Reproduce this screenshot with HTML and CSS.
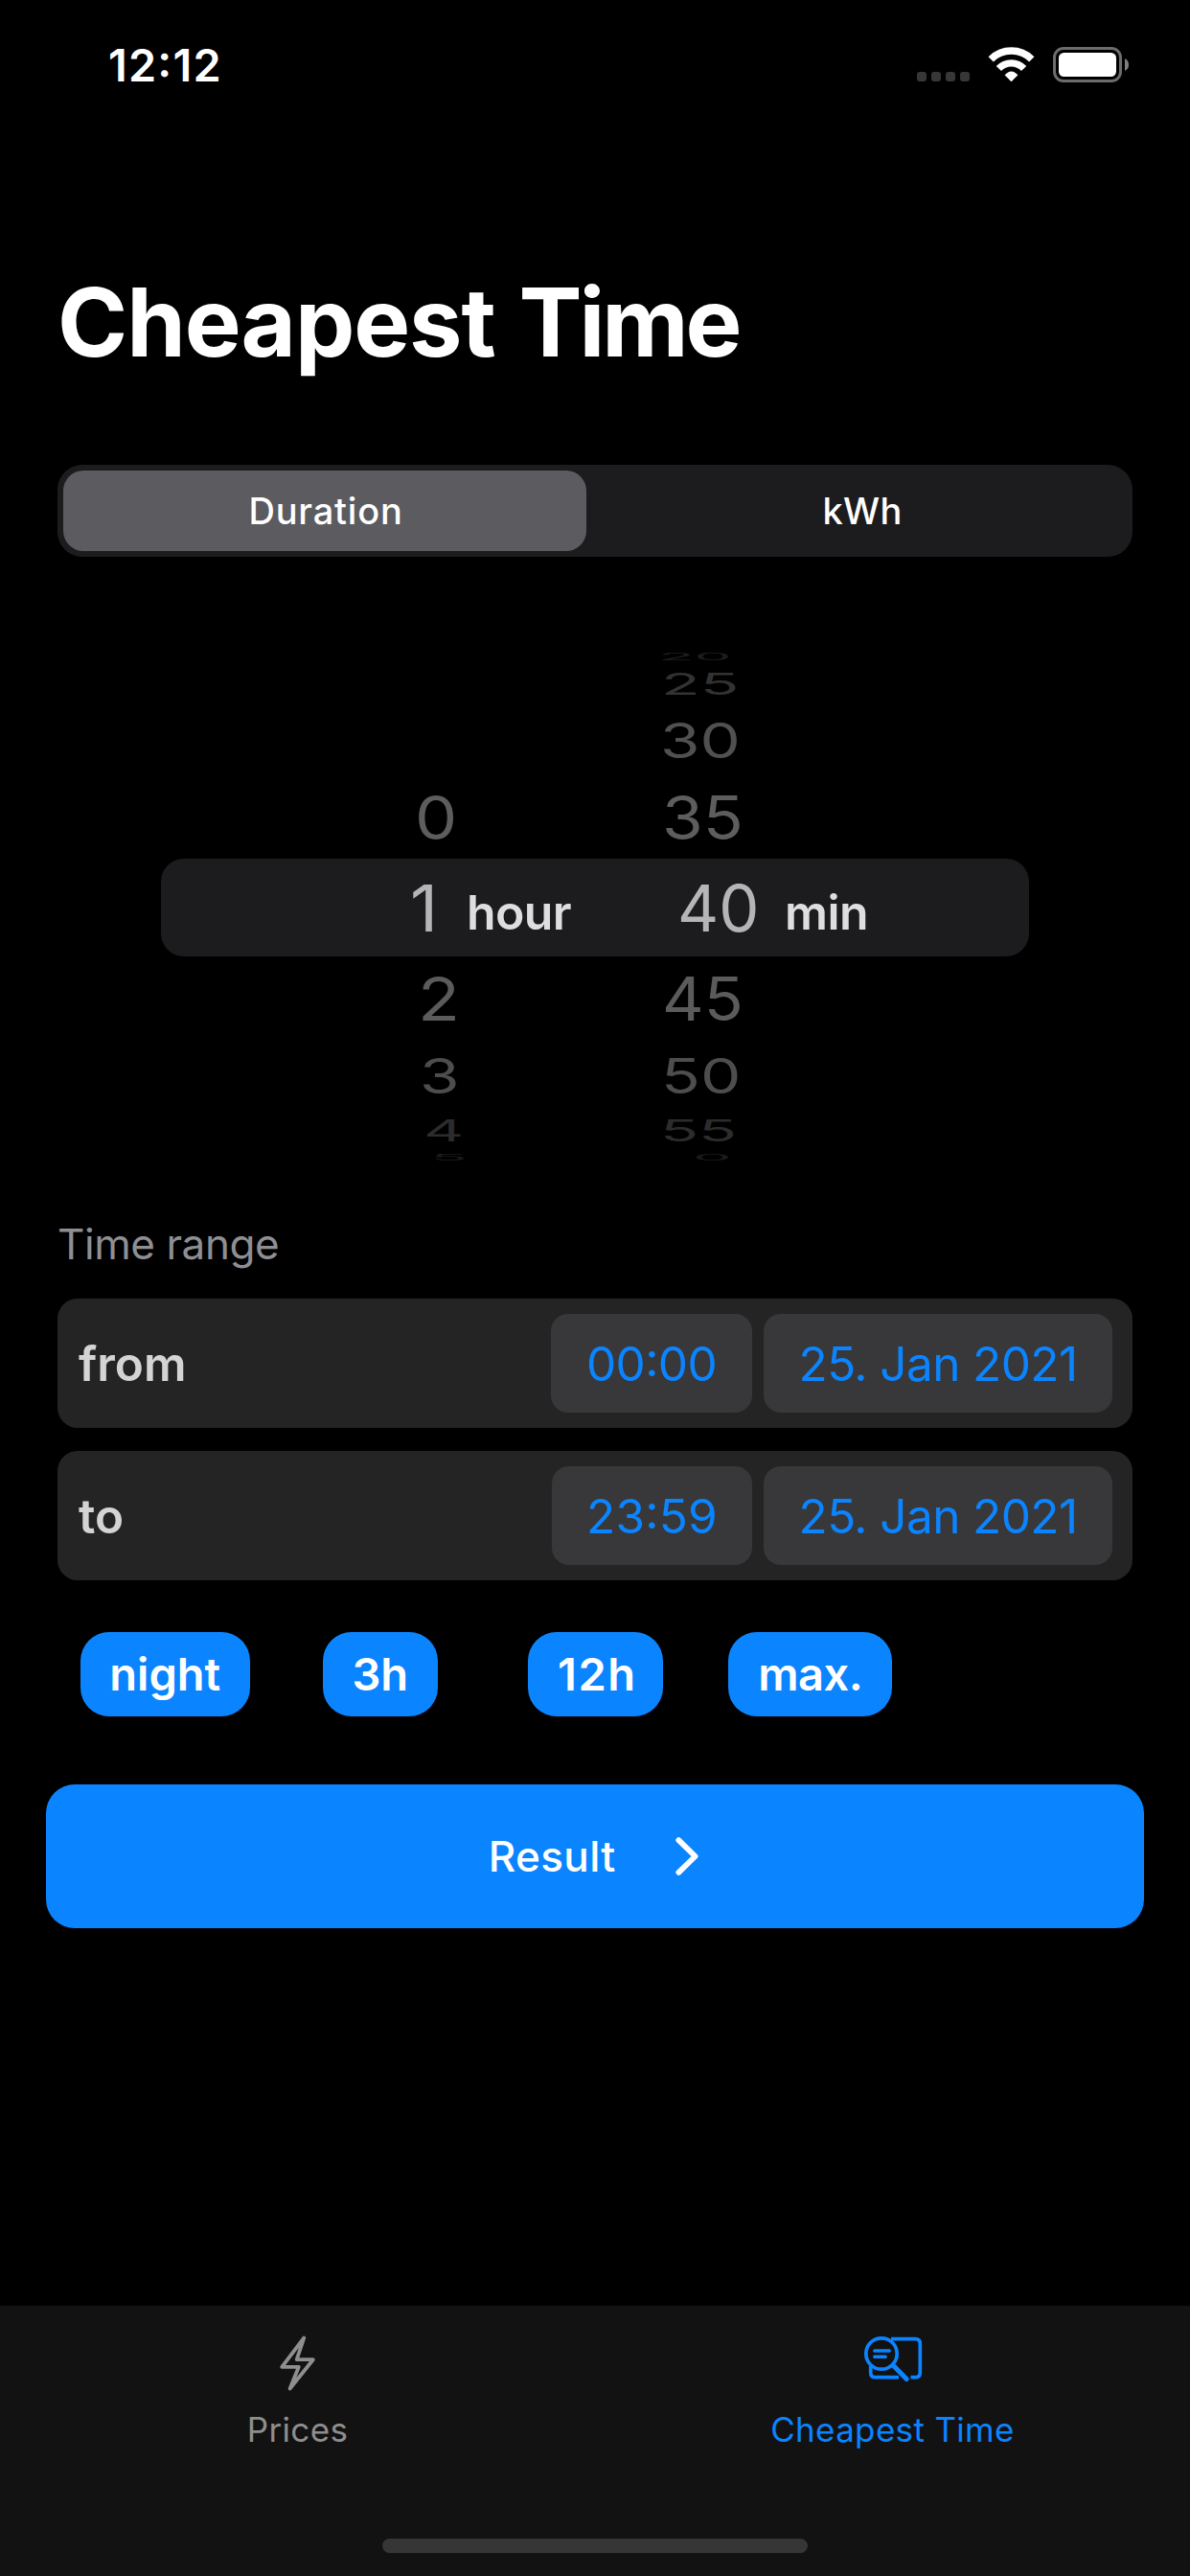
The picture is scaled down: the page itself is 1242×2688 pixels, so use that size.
FILE: index.html
```html
<!DOCTYPE html>
<html lang="en">
<head>
<meta charset="utf-8">
<title>Cheapest Time</title>
<link rel="stylesheet" href="styles.css">
</head>
<body>
<div class="screen">
  <header class="status">
    <span class="status-time">12:12</span>
    <div class="status-icons">
      <div class="signal"><i></i><i></i><i></i><i></i></div>
      <svg class="wifi" viewBox="0 0 49 38" width="49" height="38">
        <path d="M3.2 13.8A30.2 30.2 0 0 1 45.8 13.8" fill="none" stroke="#fff" stroke-width="7.5"/>
        <path d="M11.4 23.5A17.9 17.9 0 0 1 37.6 23.5" fill="none" stroke="#fff" stroke-width="7.3"/>
        <path d="M17.6 30.3Q24.5 22.6 31.4 30.3L24.5 37.2Z" fill="#fff"/>
      </svg>
      <svg class="battery" viewBox="0 0 80 38" width="80" height="38">
        <rect x="1.5" y="2.5" width="69" height="34" rx="9.5" fill="none" stroke="#6c6c6c" stroke-width="3"/>
        <rect x="6" y="7" width="60" height="25" rx="5.5" fill="#fff"/>
        <path d="M75 13Q79 15 79 19.500T75 26Z" fill="#808080"/>
      </svg>
    </div>
  </header>

  <main class="content">
    <h1 class="title">Cheapest <span class="title-end">Time</span></h1>

    <div class="segments">
      <button class="segment segment-on">Duration</button>
      <button class="segment">kWh</button>
    </div>

    <div class="picker">
      <div class="row far-top"><span class="hours"></span><span></span><span class="minutes m20">20</span></div>
      <div class="row third-top"><span class="hours"></span><span></span><span class="minutes m25">25</span></div>
      <div class="row second-top"><span class="hours"></span><span></span><span class="minutes m30">30</span></div>
      <div class="row first-top"><span class="hours h0">0</span><span></span><span class="minutes m35">35</span></div>
      <div class="row selected"><span class="hours h1">1</span><span class="unit">hour</span><span class="minutes m40">40</span><span class="unit">min</span></div>
      <div class="row first-bottom"><span class="hours h2">2</span><span></span><span class="minutes m45">45</span></div>
      <div class="row second-bottom"><span class="hours h3">3</span><span></span><span class="minutes m50">50</span></div>
      <div class="row third-bottom"><span class="hours h4">4</span><span></span><span class="minutes m55">55</span></div>
      <div class="row far-bottom"><span class="hours h5">5</span><span></span><span class="minutes m0">0</span></div>
    </div>

    <h2 class="label">Time range</h2>
    <div class="ranges">
      <div class="range">
        <span class="range-name">from</span>
        <span class="chip chip-time">00:00</span>
        <span class="chip chip-date">25. Jan 2021</span>
      </div>
      <div class="range">
        <span class="range-name">to</span>
        <span class="chip chip-time chip-end">23:59</span>
        <span class="chip chip-date">25. Jan 2021</span>
      </div>
    </div>

    <div class="presets">
      <button class="preset preset-night">night</button>
      <button class="preset preset-3h">3h</button>
      <button class="preset preset-12h">12h</button>
      <button class="preset preset-max">max.</button>
    </div>

    <button class="result">
      <span>Result</span>
      <svg viewBox="0 0 27 42" width="27" height="42"><path d="M3.300 4.200L20.600 21L3.300 37.800" fill="none" stroke="#fff" stroke-width="5.800" stroke-linecap="round" stroke-linejoin="round"/></svg>
    </button>
  </main>

  <footer class="tabbar">
    <nav class="tabs">
      <a class="tab">
        <svg viewBox="0 0 38 60" width="38" height="60"><path d="M25.300 3.500L17.700 26.200H34.800L10.600 56.500L19.800 33.800H2.200Z" fill="none" stroke="currentColor" stroke-width="3.800" stroke-linejoin="round"/></svg>
        <span>Prices</span>
      </a>
      <a class="tab tab-on">
        <svg viewBox="0 0 62 60" width="62" height="60" fill="none" stroke="currentColor" stroke-width="3.700">
          <circle cx="19" cy="20" r="16.200"/>
          <path d="M29 4.700H54.300Q59.300 4.700 59.300 9.700V39.700Q59.300 44.700 54.300 44.700H49.500"/>
          <path d="M37 44.700H12.700Q7.700 44.700 7.700 39.700V33"/>
          <path d="M11.800 17H27.200M11.800 23.200H23.200" stroke-width="3.500" stroke-linecap="round"/>
          <path d="M31 32L45.200 46.500" stroke-width="5" stroke-linecap="round"/>
        </svg>
        <span>Cheapest Time</span>
      </a>
    </nav>
    <div class="home"></div>
  </footer>
</div>
</body>
</html>
```
FILE: styles.css
```css
* { box-sizing: border-box; }

body {
  margin: 0;
  background: #000;
  color: #fff;
  font-family: Inter, "Liberation Sans", sans-serif;
  font-feature-settings: "calt" 1;
}

button {
  border: 0;
  padding: 0;
  color: inherit;
  font-family: inherit;
  font-feature-settings: inherit;
}

.screen {
  display: flex;
  flex-direction: column;
  width: 1242px;
  height: 2688px;
  overflow: hidden;
}

/* Status bar */
.status {
  display: flex;
  justify-content: space-between;
  align-items: center;
  height: 136px;
  padding: 0 63px 0 113px;
}
.status-time {
  font-size: 46.8px;
  font-weight: 600;
  letter-spacing: 1.2px;
}
.status-icons { display: flex; margin-bottom: 2px; }
.signal { display: flex; gap: 5px; padding: 27px 19px 0 0; }
.signal i { width: 10px; height: 10px; border-radius: 3px; background: #373737; }
.wifi { display: block; margin-right: 19px; }
.battery { display: block; }

/* Content column */
.content { display: flex; flex-direction: column; padding: 0 60px; }

.title {
  margin: 140px 0 0;
  font-size: 99px;
  font-weight: 700;
  line-height: 120px;
  letter-spacing: -1.1px;
  word-spacing: 2.5px;
  white-space: nowrap;
}
.title-end { letter-spacing: -3.1px; }

.segments {
  display: flex;
  height: 96px;
  margin-top: 89px;
  padding: 6px;
  border-radius: 26px;
  background: #1c1c1e;
}
.segment {
  flex: 1 0 0;
  padding-left: 12px;
  border-radius: 21px;
  background: none;
  font-size: 38px;
  font-weight: 500;
  letter-spacing: 0.3px;
}
.segment-on {
  flex: 0 0 546px;
  padding-left: 2px;
  background: #5b5b60;
  letter-spacing: 0.8px;
}

/* Wheel picker */
.picker { margin: 96px 108px 0; }
.row {
  display: grid;
  grid-template-columns: 319px 167px 165px auto;
  height: var(--h);
  line-height: var(--h);
  font-size: 68px;
  color: var(--ink);
}
.hours, .minutes {
  width: max-content;
  transform: scale(var(--sx, 1), var(--sy, 1));
  transform-origin: left center;
}

.far-top       { --h: 17px;  --sy: 0.144; --ink: #1d1d1d; }
.third-top     { --h: 40px;  --sy: 0.457; --ink: #323232; }
.second-top    { --h: 76px;  --sy: 0.74;  --ink: #505050; }
.first-top     { --h: 86px;  --sy: 0.92;  --ink: #5d5d5d; }
.selected      { --h: 102px; --ink: #b5b5b7; border-radius: 24px; background: #1c1c1e; }
.first-bottom  { --h: 88px;  --sy: 0.92;  --ink: #5b5b5b; }
.second-bottom { --h: 74px;  --sy: 0.74;  --ink: #4d4d4d; }
.third-bottom  { --h: 40px;  --sy: 0.45;  --ink: #2c2c2c; }
.far-bottom    { --h: 16px;  --sy: 0.137; --ink: #1a1a1a; }

.h0 { margin-left: 265px;   --sx: 1.03; }
.h1 { margin-left: 260px;   --sx: 1.05; }
.h2 { margin-left: 267.5px; --sx: 1.06; }
.h3 { margin-left: 270px;   --sx: 0.99; }
.h4 { margin-left: 273.5px; --sx: 0.96; }
.h5 { margin-left: 281px;   --sx: 0.94; }

.m20 { margin-left: 33px;   --sx: 0.907; }
.m25 { margin-left: 35.5px; --sx: 0.98; }
.m30 { margin-left: 34.5px; --sx: 0.987; }
.m35 { margin-left: 37px;   --sx: 1.02; }
.m40 { margin-left: 52.5px; --sx: 0.983; }
.m45 { margin-left: 36.5px; --sx: 0.995; }
.m50 { margin-left: 36px;   --sx: 0.99; }
.m55 { margin-left: 35px;   --sx: 0.969; }
.m0  { margin-left: 69px;   --sx: 0.943; }

.unit {
  padding-top: 5px;
  color: #dedee0;
  font-size: 50px;
  font-weight: 600;
  letter-spacing: -0.6px;
}

/* Time range */
.label {
  margin: 55px 0 0;
  color: #8e8e93;
  font-size: 44px;
  font-weight: 400;
  line-height: 54px;
  letter-spacing: -0.43px;
}
.ranges { display: grid; gap: 24px; margin-top: 30px; }
.range {
  display: flex;
  align-items: center;
  gap: 12px;
  height: 135px;
  padding: 0 21px 0 22px;
  border-radius: 21px;
  background: #242424;
}
.range-name {
  flex: 1;
  color: #d4d4d4;
  font-size: 49.5px;
  font-weight: 600;
}
.chip {
  height: 103px;
  border-radius: 18px;
  background: #38383a;
  color: #0b84ff;
  font-size: 49.5px;
  line-height: 105px;
  letter-spacing: -0.6px;
  text-align: center;
  white-space: nowrap;
}
.chip-time { width: 210px; }
.chip-end { width: 209px; letter-spacing: 0.2px; }
.chip-date { width: 364px; }

/* Presets */
.presets {
  display: grid;
  grid-template-columns: repeat(4, 224.5px);
  justify-items: center;
  margin-top: 54px;
}
.preset {
  height: 88px;
  padding-bottom: 2px;
  border-radius: 30px;
  background: #0b84ff;
  font-size: 47px;
  font-weight: 600;
}
.preset-night { width: 177px; }
.preset-3h { width: 120px; }
.preset-12h { width: 141px; padding-left: 4px; letter-spacing: 1.5px; }
.preset-max { width: 171px; letter-spacing: -0.5px; }

.result {
  display: flex;
  align-items: center;
  justify-content: center;
  gap: 62.5px;
  height: 150px;
  margin: 71px -12px 0;
  border-radius: 30px;
  background: #0b84ff;
  font-size: 44px;
  font-weight: 500;
  letter-spacing: 0.37px;
}

/* Tab bar */
.tabbar {
  display: flex;
  flex-direction: column;
  align-items: center;
  justify-content: space-between;
  height: 282px;
  margin-top: auto;
  padding: 30px 0 24px;
  background: #121212;
}
.tabs { display: flex; width: 100%; }
.tab {
  display: flex;
  flex: 1 0 0;
  flex-direction: column;
  align-items: center;
  gap: 19px;
  color: #8e8e8e;
  font-size: 35px;
  line-height: 41px;
  letter-spacing: 0.33px;
}
.tab-on { color: #0b84ff; }
.home { width: 444px; height: 15px; border-radius: 8px; background: #363636; }
```
